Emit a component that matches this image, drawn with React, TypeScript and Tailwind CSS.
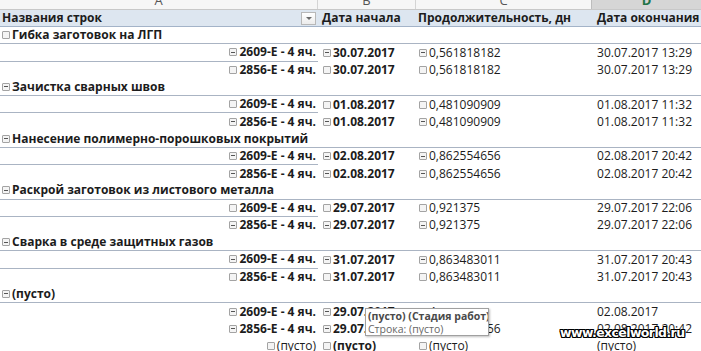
type Row = {
	a: string
	b: string
	c: string
	d: string
	m: boolean
	dLeft?: boolean
	aNormal?: boolean
	line?: boolean
}

type Group = {
	name: string
	m: boolean
	rows: Row[]
}

const GROUPS: Group[] = [
	{
		name: 'Гибка заготовок на ЛГП',
		m: false,
		rows: [
			{ a: '2609-E - 4 яч.', b: '30.07.2017', c: '0,561818182', d: '30.07.2017 13:29', m: true, line: true },
			{ a: '2856-E - 4 яч.', b: '30.07.2017', c: '0,561818182', d: '30.07.2017 13:29', m: false },
		],
	},
	{
		name: 'Зачистка сварных швов',
		m: true,
		rows: [
			{ a: '2609-E - 4 яч.', b: '01.08.2017', c: '0,481090909', d: '01.08.2017 11:32', m: false, line: true },
			{ a: '2856-E - 4 яч.', b: '01.08.2017', c: '0,481090909', d: '01.08.2017 11:32', m: true },
		],
	},
	{
		name: 'Нанесение полимерно-порошковых покрытий',
		m: true,
		rows: [
			{ a: '2609-E - 4 яч.', b: '02.08.2017', c: '0,862554656', d: '02.08.2017 20:42', m: true, line: true },
			{ a: '2856-E - 4 яч.', b: '02.08.2017', c: '0,862554656', d: '02.08.2017 20:42', m: true },
		],
	},
	{
		name: 'Раскрой заготовок из листового металла',
		m: true,
		rows: [
			{ a: '2609-E - 4 яч.', b: '29.07.2017', c: '0,921375', d: '29.07.2017 22:06', m: false, line: true },
			{ a: '2856-E - 4 яч.', b: '29.07.2017', c: '0,921375', d: '29.07.2017 22:06', m: true },
		],
	},
	{
		name: 'Сварка в среде защитных газов',
		m: true,
		rows: [
			{ a: '2609-E - 4 яч.', b: '31.07.2017', c: '0,863483011', d: '31.07.2017 20:43', m: true, line: true },
			{ a: '2856-E - 4 яч.', b: '31.07.2017', c: '0,863483011', d: '31.07.2017 20:43', m: false },
		],
	},
	{
		name: '(пусто)',
		m: true,
		rows: [
			{ a: '2609-E - 4 яч.', b: '29.07.2017', c: '4', d: '02.08.2017', m: true, dLeft: true },
			{ a: '2856-E - 4 яч.', b: '29.07.2017', c: '4,862554656', d: '02.08.2017 20:42', m: true },
			{ a: '(пусто)', b: '(пусто)', c: '(пусто)', d: '(пусто)', m: false, dLeft: true, aNormal: true },
		],
	},
]

function Toggle({ minus }: { minus: boolean }) {
	return (
		<span className="inline-flex items-center justify-center w-[8px] h-[8px] mr-[2px] shrink-0 border border-[#a3a3a3] rounded-[1px] bg-[#f4f4f4]">
			{minus && <span className="block w-[4px] h-px bg-[#555]" />}
		</span>
	)
}

function GroupRow({ g }: { g: Group }) {
	return (
		<div className="flex items-center h-[17.25px] pl-[2px] border-b border-[#aab4c3] font-bold">
			<Toggle minus={g.m} />
			<span>{g.name}</span>
		</div>
	)
}

function ChildRow({ r }: { r: Row }) {
	return (
		<div className="grid grid-cols-[318px_98px_176px_109px] h-[17.25px]">
			<div
				className={`flex items-center justify-end pr-[2px] ${r.line ? 'border-b border-[#aab4c3]' : ''} ${
					r.aNormal ? 'font-normal' : 'font-bold'
				}`}
			>
				<Toggle minus={r.m} />
				<span>{r.a}</span>
			</div>
			<div className="flex items-center pl-[5px] font-bold">
				<Toggle minus={r.m} />
				<span>{r.b}</span>
			</div>
			<div className="flex items-center pl-[3px]">
				<Toggle minus={r.m} />
				<span>{r.c}</span>
			</div>
			<div className={`flex items-center ${r.dLeft ? 'justify-start pl-[5px]' : 'justify-end pr-[9px]'}`}>
				<span>{r.d}</span>
			</div>
		</div>
	)
}

export default function App() {
	return (
		<div className="relative w-[701px] h-[351px] overflow-hidden bg-white text-[#1c1c1c] text-[12px] leading-none font-['Open_Sans',sans-serif]">
			{/* column letters */}
			<div className="grid grid-cols-[318px_98px_176px_109px] h-[10px] border-b border-[#c8c8c8] bg-[#f6f6f6] text-[#555] text-[13px] overflow-hidden">
				<div className="flex justify-center border-r border-[#d4d4d4]">
					<span className="-translate-y-[6px]">A</span>
				</div>
				<div className="flex justify-center border-r border-[#d4d4d4]">
					<span className="-translate-y-[6px]">B</span>
				</div>
				<div className="flex justify-center border-r border-[#bdbdbd]">
					<span className="-translate-y-[6px]">C</span>
				</div>
				<div className="flex justify-center bg-[#d6d6d6] text-[#217346] font-bold">
					<span className="-translate-y-[6px]">D</span>
				</div>
			</div>

			{/* pivot header */}
			<div className="grid grid-cols-[318px_98px_176px_109px] h-[17px] bg-[#dde6f0] border-b border-[#a3b3c8] font-bold">
				<div className="flex items-center justify-between pl-[2px] pr-[2px]">
					<span>Названия строк</span>
					<span className="flex items-center justify-center w-[15px] h-[13px] border border-[#b8b8b8] bg-gradient-to-b from-white to-[#ececec]">
						<span className="block w-0 h-0 border-l-[3px] border-r-[3px] border-t-[3px] border-l-transparent border-r-transparent border-t-[#6b6b6b]" />
					</span>
				</div>
				<div className="flex items-center pl-[4px]">Дата начала</div>
				<div className="flex items-center pl-[2px]">Продолжительность, дн</div>
				<div className="flex items-center pl-[5px]">Дата окончания</div>
			</div>

			{GROUPS.map(g => (
				<div key={g.name}>
					<GroupRow g={g} />
					{g.rows.map((r, i) => (
						<ChildRow key={i} r={r} />
					))}
				</div>
			))}

			{/* hover tooltip */}
			<div className="absolute left-[365px] top-[308px] w-[124px] h-[28px] border border-[#a0a0a0] bg-white shadow-[1px_1px_2px_rgba(0,0,0,0.25)] px-[2px] pt-[1px] text-[10.5px] whitespace-nowrap overflow-hidden">
				<div className="font-bold leading-[13px] text-[#4a4a4a]">(пусто) (Стадия работ)</div>
				<div className="leading-[13px] text-[#666]">Строка: (пусто)</div>
			</div>

			{/* watermark */}
			<div className="absolute left-[560px] top-[327px] font-['DejaVu_Sans',sans-serif] font-bold text-[12.5px] tracking-[-0.6px] text-white [text-shadow:1px_0_0_#000,-1px_0_0_#000,0_1px_0_#000,0_-1px_0_#000,1px_1px_0_#000,-1px_-1px_0_#000,1px_-1px_0_#000,-1px_1px_0_#000]">
				www.excelworld.ru
			</div>
		</div>
	)
}
